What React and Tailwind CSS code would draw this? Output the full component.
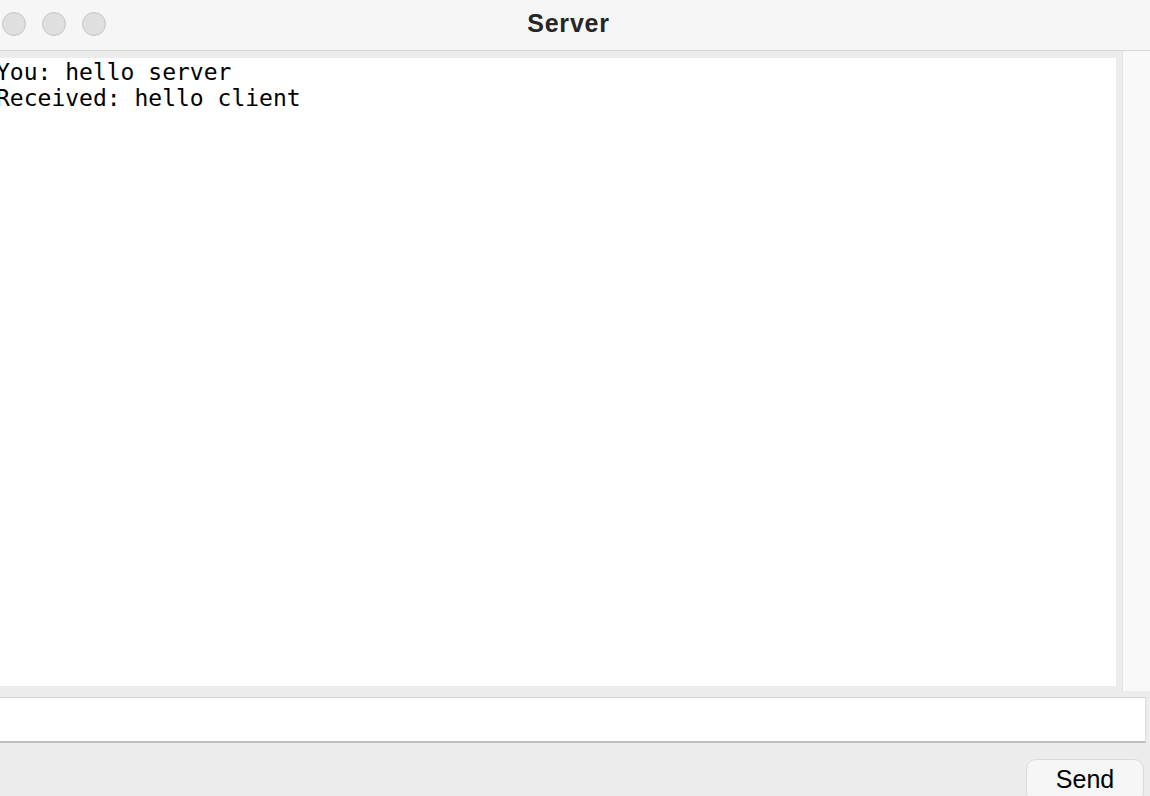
export default function App() {
  return (
    <div className="w-[1150px] h-[796px] overflow-hidden bg-[#ececec] flex flex-col" style={{ fontFamily: '"Liberation Sans", Arial, sans-serif' }}>
      <div className="h-[51px] shrink-0 bg-[#f6f6f6] border-b border-[#d8d8d8] relative flex items-center justify-center">
        <div className="absolute left-[2px] top-[12px] flex gap-[16px]">
          <div className="w-[24px] h-[24px] rounded-full bg-[#dfdfdf] border border-[#c6c6c6]" />
          <div className="w-[24px] h-[24px] rounded-full bg-[#dfdfdf] border border-[#c6c6c6]" />
          <div className="w-[24px] h-[24px] rounded-full bg-[#dfdfdf] border border-[#c6c6c6]" />
        </div>
        <div className="text-[25px] font-bold tracking-[0.8px] text-[#262626] leading-none pr-[13px] pb-[3px]">Server</div>
      </div>
      <div className="flex items-start shrink-0">
        <div className="mt-[7px] w-[1116px] h-[628px] bg-white overflow-hidden pt-[1px]">
          <div className="-ml-[4px] text-[23px] leading-[26px] text-black whitespace-pre" style={{ fontFamily: '"DejaVu Sans Mono", Menlo, monospace' }}>
            <div>You: hello server</div>
            <div>Received: hello client</div>
          </div>
        </div>
        <div className="ml-[6px] w-[28px] h-[640px] bg-[#f9f9f9] border-l border-[#e4e4e4]" />
      </div>
      <div className="mt-[6px] w-[1146px] h-[46px] shrink-0 bg-white border-t border-[#d4d4d4] border-r border-r-[#dcdcdc] border-b-2 border-b-[#bdbdbd]" />
      <div className="flex justify-end pr-[6px] mt-[16px]">
        <div className="w-[118px] h-[44px] rounded-[10px] bg-[#f6f6f6] border border-[#dadada] flex justify-center pt-[7px] text-[25px] leading-none text-black">
          Send
        </div>
      </div>
    </div>
  );
}
